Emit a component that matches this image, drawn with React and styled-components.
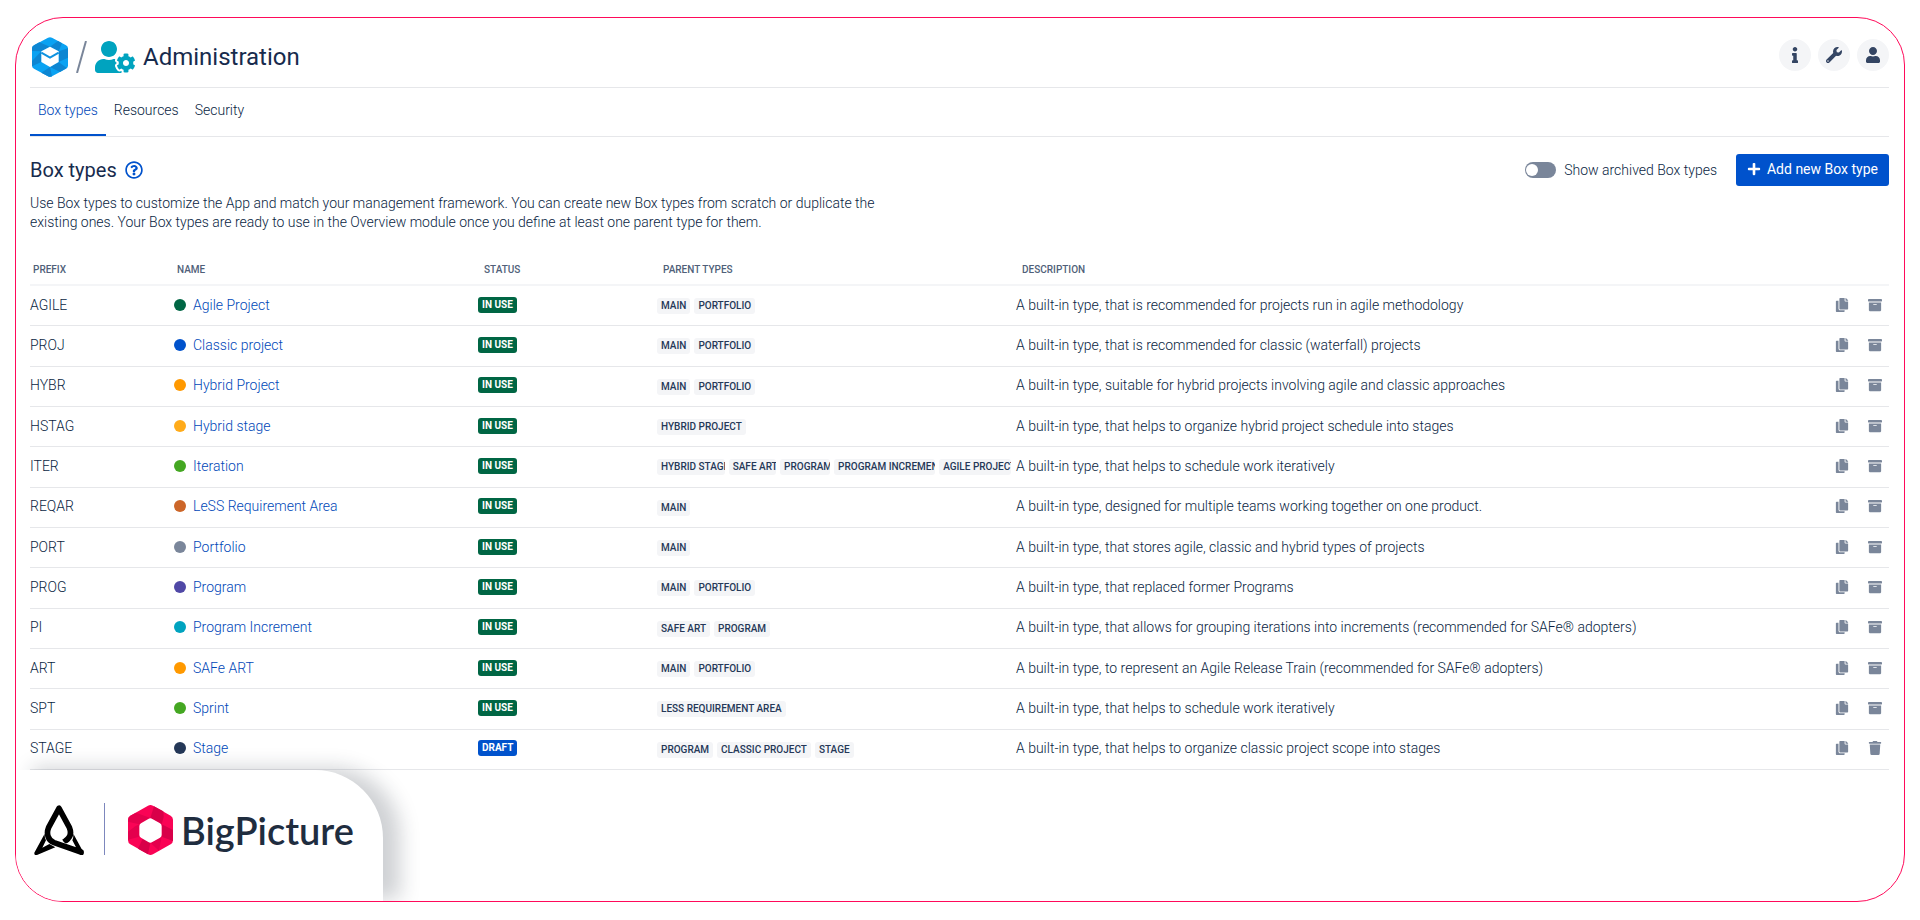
import React, { useState } from 'react';
import styled, { createGlobalStyle } from 'styled-components';
import {
  FaArchive,
  FaCopy,
  FaInfo,
  FaPlus,
  FaRegQuestionCircle,
  FaTrash,
  FaUser,
  FaUserCog,
  FaWrench
} from 'react-icons/fa';

const TABS = ['Box types', 'Resources', 'Security'];

const BOX_TYPES = [
  {
    prefix: 'AGILE',
    name: 'Agile Project',
    color: '#006644',
    status: 'In use',
    parents: ['Main', 'Portfolio'],
    description: 'A built-in type, that is recommended for projects run in agile methodology'
  },
  {
    prefix: 'PROJ',
    name: 'Classic project',
    color: '#0052cc',
    status: 'In use',
    parents: ['Main', 'Portfolio'],
    description: 'A built-in type, that is recommended for classic (waterfall) projects'
  },
  {
    prefix: 'HYBR',
    name: 'Hybrid Project',
    color: '#ff9900',
    status: 'In use',
    parents: ['Main', 'Portfolio'],
    description: 'A built-in type, suitable for hybrid projects involving agile and classic approaches'
  },
  {
    prefix: 'HSTAG',
    name: 'Hybrid stage',
    color: '#ffab1a',
    status: 'In use',
    parents: ['Hybrid project'],
    description: 'A built-in type, that helps to organize hybrid project schedule into stages'
  },
  {
    prefix: 'ITER',
    name: 'Iteration',
    color: '#44a722',
    status: 'In use',
    parents: ['Hybrid stage', 'SAFe ART', 'Program', 'Program Increment', 'Agile Project'],
    description: 'A built-in type, that helps to schedule work iteratively'
  },
  {
    prefix: 'REQAR',
    name: 'LeSS Requirement Area',
    color: '#cc6629',
    status: 'In use',
    parents: ['Main'],
    description: 'A built-in type, designed for multiple teams working together on one product.'
  },
  {
    prefix: 'PORT',
    name: 'Portfolio',
    color: '#7a869a',
    status: 'In use',
    parents: ['Main'],
    description: 'A built-in type, that stores agile, classic and hybrid types of projects'
  },
  {
    prefix: 'PROG',
    name: 'Program',
    color: '#5048a6',
    status: 'In use',
    parents: ['Main', 'Portfolio'],
    description: 'A built-in type, that replaced former Programs'
  },
  {
    prefix: 'PI',
    name: 'Program Increment',
    color: '#00a3bf',
    status: 'In use',
    parents: ['SAFe ART', 'Program'],
    description: 'A built-in type, that allows for grouping iterations into increments (recommended for SAFe® adopters)'
  },
  {
    prefix: 'ART',
    name: 'SAFe ART',
    color: '#ff9900',
    status: 'In use',
    parents: ['Main', 'Portfolio'],
    description: 'A built-in type, to represent an Agile Release Train (recommended for SAFe® adopters)'
  },
  {
    prefix: 'SPT',
    name: 'Sprint',
    color: '#44a722',
    status: 'In use',
    parents: ['LeSS Requirement Area'],
    description: 'A built-in type, that helps to schedule work iteratively'
  },
  {
    prefix: 'STAGE',
    name: 'Stage',
    color: '#253858',
    status: 'Draft',
    parents: ['Program', 'Classic project', 'Stage'],
    description: 'A built-in type, that helps to organize classic project scope into stages'
  }
];

const AppLogo = () => (
  <svg width="36" height="40" viewBox="0 0 108 120" aria-hidden="true">
    <path d="M48 2Q54-1 60 2L102 25Q108 28 108 34V86Q108 92 102 95L60 118Q54 121 48 118L6 95Q0 92 0 86V34Q0 28 6 25Z" fill="#0aa2f2" />
    <path d="M22 16L54 29L28 43L0 42V34Q0 28 6 25Z" fill="#0d86d2" />
    <path d="M54 29L78 12L90 19L80 43Z" fill="#0d86d2" />
    <path d="M80 43L108 34V62L80 75Z" fill="#0d86d2" />
    <path d="M80 75L104 93L84 105L54 90Z" fill="#0d86d2" />
    <path d="M54 90L60 118Q54 121 48 118L28 107Z" fill="#0d86d2" />
    <path d="M28 43L0 72V88L28 75Z" fill="#0d86d2" />
    <path d="M54 29L80 43V75L54 90L28 75V43Z" fill="#fff" />
    <path d="M28 47L54 62L80 47" fill="none" stroke="#0d92e0" strokeWidth="6" />
  </svg>
);

const AppfireLogo = () => (
  <svg width="50" height="50" viewBox="0 0 150 150" aria-hidden="true">
    <g fill="none" stroke="#000" strokeWidth="17" strokeLinecap="round" strokeLinejoin="round">
      <path d="M96 106C110 97 112 82 106 67L75 10L44 67C36 86 42 106 60 113L141 141" />
    </g>
    <path d="M32 86L1 143Q0 152 9 150L64 127L46 117L25 128L36 106Q31 97 32 86Z" />
    <path d="M118 86L149 143Q150 152 141 150L113 133L126 127L115 106Q119 97 118 86Z" />
    <path d="M84 104L98 98L106 110L96 114Z" />
  </svg>
);

const BigPictureLogo = () => (
  <svg width="45" height="50" viewBox="0 0 135 150" aria-hidden="true">
    <path d="M60 2Q67-2 75 2L128 32Q135 36 135 44V106Q135 114 128 118L75 148Q67 152 60 148L7 118Q0 114 0 106V44Q0 36 7 32Z" fill="#fa0355" />
    <path d="M67 39L78 4L106 19L107 36L101 58Z" fill="#d80049" />
    <path d="M101 58L135 75V108L101 95Z" fill="#d80049" />
    <path d="M101 95L93 137L67 113Z" fill="#e4004d" />
    <path d="M67 113L60 148L30 131L44 101Z" fill="#d80049" />
    <path d="M34 95L0 104V80L22 64L34 58Z" fill="#e4004d" />
    <path d="M34 58L0 50V44Q0 36 7 32L24 23L67 39Z" fill="#e4004d" />
    <path d="M61 42Q67 38 73 42L96 55Q101 58 101 64V90Q101 95 96 98L73 111Q67 115 61 111L39 98Q34 95 34 90V64Q34 58 39 55Z" fill="#fff" />
  </svg>
);

const App = () => {
  const [activeTab, setActiveTab] = useState('Box types');
  const [showArchived, setShowArchived] = useState(false);

  return (
    <Page>
      <GlobalStyle />
      <Frame>
        <Header>
          <Breadcrumb>
            <AppLogo />
            <Slash width="11" height="32" viewBox="0 0 11 32" aria-hidden="true">
              <path d="M10 0L1 32" stroke="#7a869a" strokeWidth="2" />
            </Slash>
            <FaUserCog size={40} color="#00a3bf" aria-hidden="true" />
            <PageTitle>Administration</PageTitle>
          </Breadcrumb>
          <HeaderActions>
            <RoundButton type="button" aria-label="Info"><FaInfo /></RoundButton>
            <RoundButton type="button" aria-label="Settings"><FaWrench /></RoundButton>
            <RoundButton type="button" aria-label="Profile"><FaUser /></RoundButton>
          </HeaderActions>
        </Header>

        <Tabs>
          {TABS.map(tab => (
            <Tab
              key={tab}
              type="button"
              $active={tab === activeTab}
              onClick={() => setActiveTab(tab)}
            >
              {tab}
            </Tab>
          ))}
        </Tabs>

        <Toolbar>
          <SectionTitle>
            Box types
            <HelpButton type="button" aria-label="Help"><FaRegQuestionCircle /></HelpButton>
          </SectionTitle>
          <ToolbarActions>
            <SwitchLabel>
              <Switch
                type="checkbox"
                role="switch"
                checked={showArchived}
                onChange={e => setShowArchived(e.target.checked)}
              />
              Show archived Box types
            </SwitchLabel>
            <AddButton type="button">
              <FaPlus />
              Add new Box type
            </AddButton>
          </ToolbarActions>
        </Toolbar>

        <Intro>
          Use Box types to customize the App and match your management framework. You can create
          new Box types from scratch or duplicate the existing ones. Your Box types are ready to
          use in the Overview module once you define at least one parent type for them.
        </Intro>

        <TableArea>
          <Table>
            <thead>
              <tr>
                <HeadCell $width={144}>Prefix</HeadCell>
                <HeadCell $width={304}>Name</HeadCell>
                <HeadCell $width={179} $inset>Status</HeadCell>
                <HeadCell $width={359} $inset>Parent types</HeadCell>
                <HeadCell $inset>Description</HeadCell>
                <HeadCell $width={54} aria-label="Actions" />
              </tr>
            </thead>
            <tbody>
              {BOX_TYPES.map(type => (
                <tr key={type.prefix}>
                  <Cell>{type.prefix}</Cell>
                  <Cell>
                    <NameGroup>
                      <Dot $color={type.color} />
                      <NameLink href="#">{type.name}</NameLink>
                    </NameGroup>
                  </Cell>
                  <Cell>
                    <Status $draft={type.status === 'Draft'}>{type.status}</Status>
                  </Cell>
                  <Cell>
                    <ParentList>
                      {type.parents.map(parent => (
                        <ParentTag key={parent}>{parent}</ParentTag>
                      ))}
                    </ParentList>
                  </Cell>
                  <Cell>{type.description}</Cell>
                  <Cell>
                    <RowActions>
                      <IconButton type="button" aria-label="Duplicate"><FaCopy /></IconButton>
                      {type.status === 'Draft' ? (
                        <IconButton type="button" aria-label="Delete"><FaTrash /></IconButton>
                      ) : (
                        <IconButton type="button" aria-label="Archive"><FaArchive /></IconButton>
                      )}
                    </RowActions>
                  </Cell>
                </tr>
              ))}
            </tbody>
          </Table>
        </TableArea>

        <Brand>
          <AppfireLogo />
          <BrandDivider />
          <BrandName>
            <BigPictureLogo />
            BigPicture
          </BrandName>
        </Brand>
      </Frame>
    </Page>
  );
};

const GlobalStyle = createGlobalStyle`
  * {
    box-sizing: border-box;
  }

  body {
    margin: 0;
    background-color: white;
    color: #091e42;
    font-family: Roboto, "Liberation Sans", sans-serif;
    font-size: 14px;
    font-weight: 300;
  }

  button {
    font: inherit;
    border: none;
    padding: 0;
    cursor: pointer;
  }
`;

const Page = styled.div`
  display: flex;
  min-height: 100vh;
  padding: 17px 15px 18px;
`;

const Frame = styled.main`
  flex: 1;
  min-width: 0;
  display: flex;
  flex-direction: column;
  padding: 0 15px 0 14px;
  border: 1px solid #ff0a5a;
  border-radius: 48px;
  overflow: hidden;
`;

const Header = styled.header`
  display: flex;
  align-items: flex-start;
  justify-content: space-between;
  height: 70px;
  padding-top: 19px;
  border-bottom: 1px solid #e6e7ea;
`;

const Breadcrumb = styled.div`
  display: flex;
  align-items: center;
  height: 40px;
  padding-left: 2px;
  gap: 8px;
`;

const Slash = styled.svg`
  flex: none;
`;

const PageTitle = styled.h1`
  margin: 0;
  color: #172b4d;
  font-size: 24px;
  font-weight: 400;
  line-height: 32px;
`;

const HeaderActions = styled.div`
  display: flex;
  gap: 7px;
  padding-top: 2px;
`;

const RoundButton = styled.button`
  display: flex;
  align-items: center;
  justify-content: center;
  width: 32px;
  height: 32px;
  border-radius: 50%;
  background-color: #f4f5f7;
  color: #344563;
  font-size: 16px;

  &:hover {
    background-color: #ebecf0;
  }
`;

const Tabs = styled.nav`
  display: flex;
  border-bottom: 1px solid #e6e7ea;
`;

const Tab = styled.button`
  height: 48px;
  padding: 0 8px 2px;
  background: none;
  border-bottom: 2px solid ${props => props.$active ? '#0052cc' : 'transparent'};
  color: ${props => props.$active ? '#0047b8' : '#091e42'};
`;

const Toolbar = styled.div`
  display: flex;
  align-items: center;
  justify-content: space-between;
  margin-top: 17px;
`;

const SectionTitle = styled.h2`
  display: flex;
  align-items: center;
  gap: 8px;
  margin: 0;
  color: #172b4d;
  font-size: 20px;
  font-weight: 400;
`;

const HelpButton = styled.button`
  display: flex;
  background: none;
  color: #0052cc;
  font-size: 18px;
`;

const ToolbarActions = styled.div`
  display: flex;
  align-items: center;
  gap: 19px;
`;

const SwitchLabel = styled.label`
  display: flex;
  align-items: center;
  gap: 8px;
  cursor: pointer;
`;

const Switch = styled.input`
  appearance: none;
  display: flex;
  align-items: center;
  justify-content: ${props => props.checked ? 'flex-end' : 'flex-start'};
  width: 31px;
  height: 16px;
  margin: 0;
  padding: 0 1px;
  border-radius: 8px;
  background-color: ${props => props.checked ? '#006644' : '#7a869a'};
  cursor: pointer;

  &::before {
    content: '';
    width: 12px;
    height: 12px;
    border-radius: 50%;
    background-color: white;
  }
`;

const AddButton = styled.button`
  display: flex;
  align-items: center;
  gap: 6px;
  height: 32px;
  padding: 0 11px 2px;
  border-radius: 3px;
  background-color: #0052cc;
  color: white;
  font-weight: 400;

  &:hover {
    background-color: #0065ff;
  }
`;

const Intro = styled.p`
  max-width: 860px;
  margin: 8px 0 0;
  line-height: 19px;
`;

const TableArea = styled.div`
  flex: 1;
  display: flex;
  margin-top: 20px;
`;

const Table = styled.table`
  width: 100%;
  table-layout: fixed;
  border-collapse: separate;
  border-spacing: 0;
`;

const HeadCell = styled.th`
  width: ${props => props.$width ? `${props.$width}px` : 'auto'};
  height: 34px;
  padding: 0 0 8px ${props => props.$inset ? '6px' : '3px'};
  border-bottom: 2px solid #f4f5f7;
  color: #505f79;
  font-size: 10px;
  font-weight: 500;
  line-height: 12px;
  text-align: left;
  text-transform: uppercase;
  vertical-align: bottom;
`;

const Cell = styled.td`
  height: 40px;
  padding: 0 0 2px;
  border-bottom: 1px solid #e6e7ea;
  color: #091e42;
  line-height: 20px;
  white-space: nowrap;
`;

const NameGroup = styled.div`
  display: flex;
  align-items: center;
  gap: 7px;
`;

const Dot = styled.span`
  width: 12px;
  height: 12px;
  border-radius: 50%;
  background-color: ${props => props.$color};
`;

const NameLink = styled.a`
  color: #0047b8;
  text-decoration: none;

  &:hover {
    text-decoration: underline;
  }
`;

const Status = styled.span`
  display: block;
  width: fit-content;
  padding: 0 4px;
  border-radius: 3px;
  background-color: ${props => props.$draft ? '#0052cc' : '#006644'};
  color: white;
  font-size: 10px;
  font-weight: 700;
  line-height: 16px;
  text-transform: uppercase;
`;

const ParentList = styled.div`
  display: flex;
  gap: 4px;
  padding: 3px 5px 0 0;
`;

const ParentTag = styled.span`
  min-width: 0;
  padding: 0 4px;
  border-radius: 3px;
  background-color: #f4f5f7;
  color: #253858;
  font-size: 10px;
  font-weight: 500;
  line-height: 16px;
  text-transform: uppercase;
  overflow: hidden;
`;

const RowActions = styled.div`
  display: flex;
  gap: 19px;
`;

const IconButton = styled.button`
  display: flex;
  justify-content: center;
  width: 14px;
  background: none;
  color: #7a869a;
  font-size: 14px;

  &:hover {
    color: #344563;
  }
`;

/* The brand plate bleeds to the left edge of the frame */
const Brand = styled.footer`
  position: relative;
  display: flex;
  align-items: flex-start;
  width: 367px;
  height: 131px;
  margin-left: -14px;
  padding: 35px 0 0 18px;
  border-radius: 0 68px 0 0;
  background-color: white;
  box-shadow: 17px -2px 20px rgba(30, 40, 52, 0.21);
`;

const BrandDivider = styled.span`
  width: 1px;
  height: 52px;
  margin: -2px 23px 0 20px;
  background-color: #7d87bd;
`;

const BrandName = styled.span`
  display: flex;
  align-items: center;
  gap: 8px;
  color: #1f2d3f;
  font-family: Lato, "Open Sans", sans-serif;
  font-size: 38px;
  font-weight: 600;
  line-height: 48px;
`;

export default App;
